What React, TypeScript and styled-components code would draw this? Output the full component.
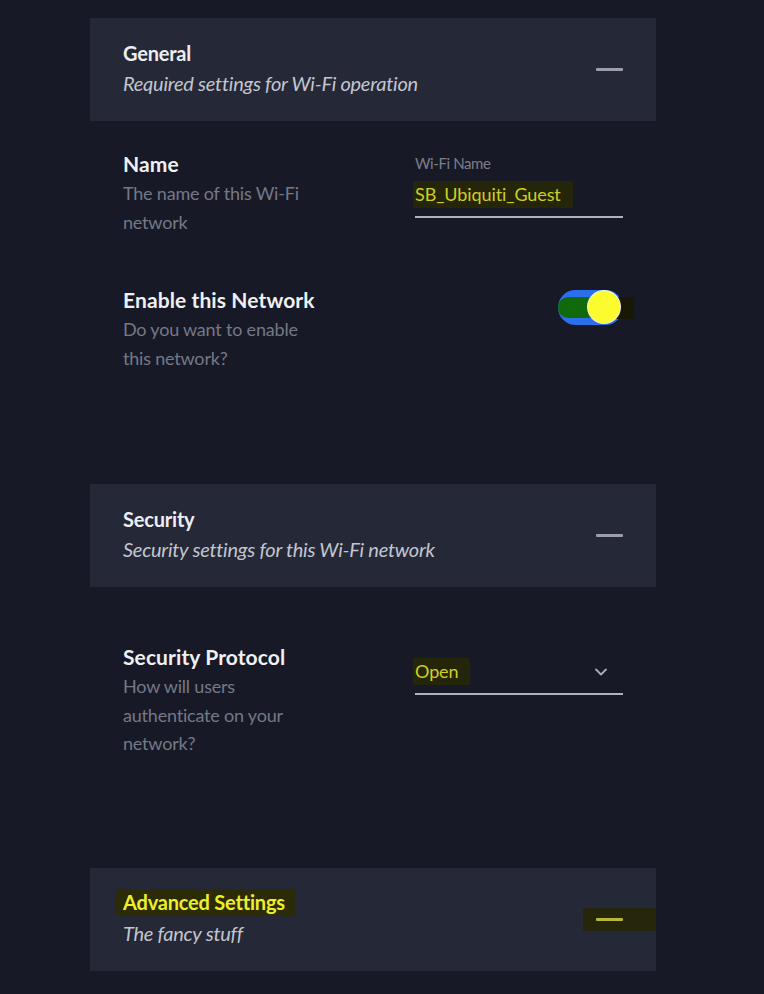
import React from "react";
import styled, { createGlobalStyle } from "styled-components";

const Global = createGlobalStyle`
  html, body { margin: 0; padding: 0; background: #171a26; }
  body { font-family: Lato, "Noto Sans", sans-serif; -webkit-font-smoothing: antialiased; }
`;

const Page = styled.div`
  width: 764px;
  min-height: 994px;
  background: #171a26;
  padding: 18px 0 0 90px;
  box-sizing: border-box;
`;

const Column = styled.div`
  width: 566px;
  display: flex;
  flex-direction: column;
`;

const Header = styled.div`
  height: 103px;
  background: #252837;
  display: flex;
  align-items: center;
  justify-content: space-between;
  padding: 0 33px;
  box-sizing: border-box;
`;

const HeaderText = styled.div`
  display: flex;
  flex-direction: column;
  padding-bottom: 2px;
`;

const HeaderTitle = styled.div<{ $hl?: boolean }>`
  font-size: 20px;
  font-weight: 700;
  line-height: 28px;
  letter-spacing: -0.2px;
  color: ${(p) => (p.$hl ? "#eeee2a" : "#eceef2")};
  align-self: flex-start;
  ${(p) => (p.$hl ? "background: #2b2b07; margin-left: -8px; padding: 0 10px 0 8px; line-height: 26px; margin-bottom: 2px;" : "")}
`;

const HeaderSub = styled.div`
  font-size: 20px;
  font-style: italic;
  line-height: 32px;
  color: #c3c5cf;
  letter-spacing: -0.25px;
`;

const MinusWrap = styled.div<{ $hl?: boolean }>`
  display: flex;
  align-items: center;
  height: 23px;
  ${(p) => (p.$hl ? "background: #26260a; margin-right: -33px; padding: 0 33px 0 13px;" : "")}
`;

const Minus = styled.div<{ $hl?: boolean }>`
  width: 27px;
  height: 3px;
  border-radius: 1px;
  background: ${(p) => (p.$hl ? "#b7b73a" : "#9c9eac")};
`;

const Row = styled.div<{ $top: number }>`
  margin-top: ${(p) => p.$top}px;
  display: grid;
  grid-template-columns: 292px 208px;
  padding-left: 33px;
`;

const Info = styled.div`
  display: flex;
  flex-direction: column;
`;

const RowTitle = styled.div`
  font-size: 21px;
  font-weight: 700;
  line-height: 30px;
  letter-spacing: 0.1px;
  color: #eef0f3;
`;

const RowDesc = styled.div`
  font-size: 18px;
  line-height: 28.5px;
  color: #757887;
  width: 190px;
  letter-spacing: -0.2px;
`;

const Field = styled.div<{ $top?: number }>`
  display: flex;
  flex-direction: column;
  padding-top: ${(p) => p.$top ?? 0}px;
`;

const FieldLabel = styled.div`
  font-size: 15px;
  line-height: 18px;
  color: #7b7e8c;
  margin-top: 5px;
  margin-bottom: 9px;
  letter-spacing: -0.4px;
`;

const FieldBox = styled.div`
  display: flex;
  align-items: center;
  justify-content: space-between;
  border-bottom: 2px solid #b0b2bd;
  padding-bottom: 8px;
`;

const Value = styled.span`
  font-size: 18px;
  line-height: 27px;
  color: #cfcf22;
  background: #25250a;
  margin-left: -2px;
  padding: 0 12px 0 2px;
  border-radius: 2px;
  letter-spacing: -0.1px;
`;

const ToggleArea = styled.div`
  display: flex;
  justify-content: flex-end;
  padding-top: 5px;
`;

const Toggle = styled.div`
  position: relative;
  width: 65px;
  height: 35px;
  border-radius: 18px;
  background: #2b6fee;
`;

const ToggleFill = styled.div`
  position: absolute;
  left: 0;
  top: 7px;
  width: 38px;
  height: 21px;
  background: #106a0c;
  border-radius: 10px 0 0 10px;
`;

const ToggleShade = styled.div`
  position: absolute;
  left: 40px;
  top: 7px;
  width: 36px;
  height: 22px;
  background: #191804;
`;

const Knob = styled.div`
  position: absolute;
  right: 3px;
  top: 1px;
  width: 32px;
  height: 32px;
  border-radius: 50%;
  background: #fbfb2e;
  box-shadow: 0 0 0 1px #f2f2e0;
`;

const Body = styled.div<{ $h: number }>`
  height: ${(p) => p.$h}px;
  display: flex;
  flex-direction: column;
`;

const Chevron = () => (
  <svg width="16" height="16" viewBox="0 0 16 16" style={{ marginRight: 14 }}>
    <path d="M3 5.5 L8 10.5 L13 5.5" fill="none" stroke="#a9abb6" strokeWidth="1.8" strokeLinecap="round" strokeLinejoin="round" />
  </svg>
);

export default function App() {
  return (
    <>
      <Global />
      <Page>
        <Column>
          <Header>
            <HeaderText>
              <HeaderTitle>General</HeaderTitle>
              <HeaderSub>Required settings for Wi-Fi operation</HeaderSub>
            </HeaderText>
            <MinusWrap><Minus /></MinusWrap>
          </Header>
          <Body $h={363}>
            <Row $top={28}>
              <Info>
                <RowTitle>Name</RowTitle>
                <RowDesc>The name of this Wi-Fi network</RowDesc>
              </Info>
              <Field>
                <FieldLabel>Wi-Fi Name</FieldLabel>
                <FieldBox>
                  <Value>SB_Ubiquiti_Guest</Value>
                </FieldBox>
              </Field>
            </Row>
            <Row $top={49}>
              <Info>
                <RowTitle>Enable this Network</RowTitle>
                <RowDesc>Do you want to enable this network?</RowDesc>
              </Info>
              <ToggleArea>
                <Toggle>
                  <ToggleFill />
                  <ToggleShade />
                  <Knob />
                </Toggle>
              </ToggleArea>
            </Row>
          </Body>
          <Header>
            <HeaderText>
              <HeaderTitle>Security</HeaderTitle>
              <HeaderSub>Security settings for this Wi-Fi network</HeaderSub>
            </HeaderText>
            <MinusWrap><Minus /></MinusWrap>
          </Header>
          <Body $h={281}>
            <Row $top={55}>
              <Info>
                <RowTitle>Security Protocol</RowTitle>
                <RowDesc>How will users authenticate on your network?</RowDesc>
              </Info>
              <Field $top={16}>
                <FieldBox>
                  <Value>Open</Value>
                  <Chevron />
                </FieldBox>
              </Field>
            </Row>
          </Body>
          <Header>
            <HeaderText>
              <HeaderTitle $hl>Advanced Settings</HeaderTitle>
              <HeaderSub>The fancy stuff</HeaderSub>
            </HeaderText>
            <MinusWrap $hl><Minus $hl /></MinusWrap>
          </Header>
        </Column>
      </Page>
    </>
  );
}
